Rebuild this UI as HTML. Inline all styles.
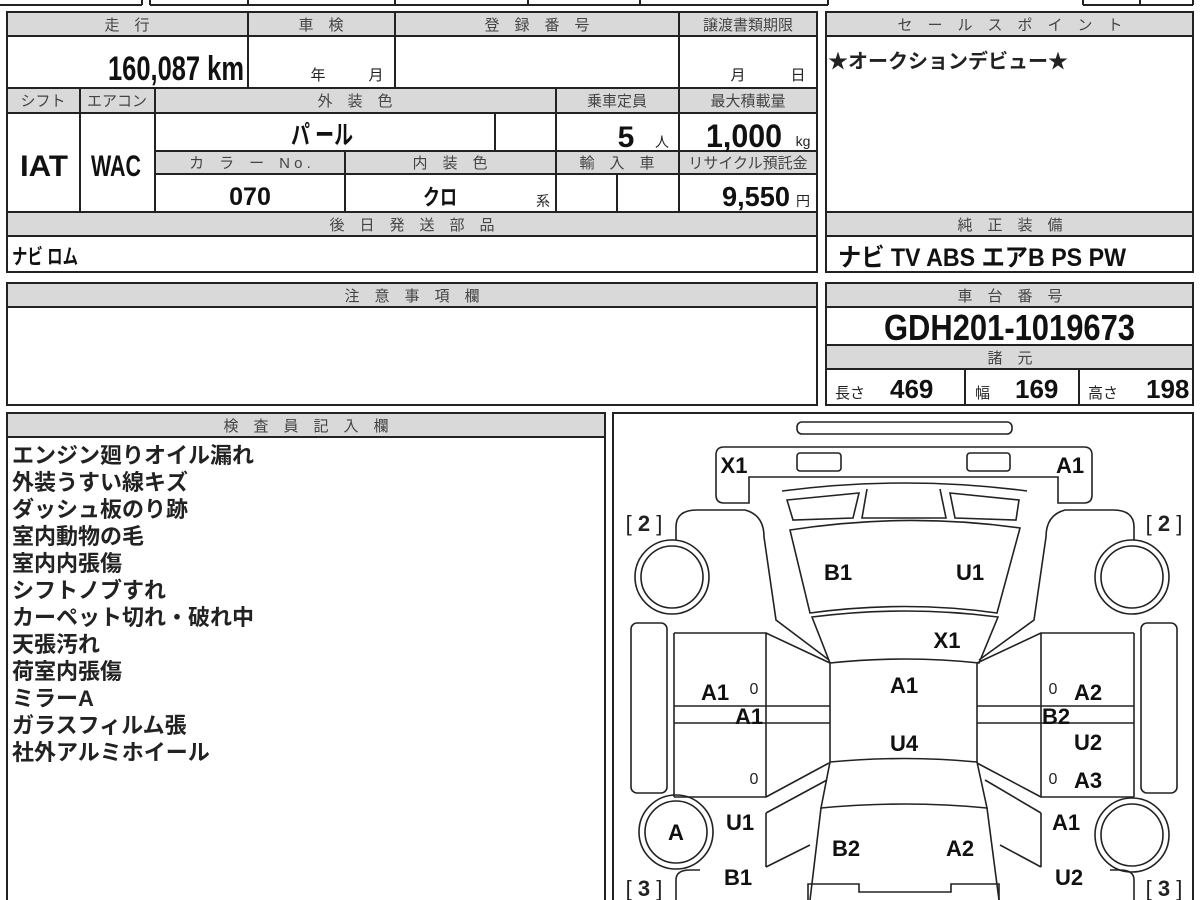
<!DOCTYPE html>
<html><head><meta charset="utf-8"><style>
html,body{margin:0;padding:0;background:#fff;width:1200px;height:900px;overflow:hidden}
svg{display:block}
.h{font-family:"Liberation Sans","Noto Sans CJK JP",sans-serif;font-size:15px;fill:#444;text-anchor:middle}
.v{font-family:"Liberation Sans Narrow","Liberation Sans","Noto Sans CJK JP",sans-serif;font-weight:bold;fill:#111}
.j{font-family:"Liberation Sans","Noto Sans CJK JP",sans-serif;fill:#222}
.d{font-family:"Liberation Sans","Noto Sans CJK JP",sans-serif;font-weight:bold;font-size:22px;fill:#111;text-anchor:middle}
</style></head><body>
<svg width="1200" height="900" viewBox="0 0 1200 900" xmlns="http://www.w3.org/2000/svg">
<g fill="#d9d9d9">
<rect x="7" y="12" width="810" height="24"/><rect x="7" y="88" width="810" height="25"/>
<rect x="155" y="151" width="662" height="23"/><rect x="7" y="212" width="810" height="24"/>
<rect x="826" y="12" width="367" height="24"/><rect x="826" y="212" width="367" height="24"/>
<rect x="826" y="283" width="367" height="24"/><rect x="826" y="345" width="367" height="24"/>
<rect x="7" y="283" width="810" height="24"/><rect x="7" y="413" width="598" height="24"/>
</g>
<g stroke="#222" stroke-width="2" fill="none">
<path d="M0,5H142M150,5H828M1083,5H1193M142,0V5M150,0V5M248,0V5M395,0V5M528,0V5M640,0V5M828,0V5M1083,0V5M1140,0V5M1193,0V5"/>
<rect x="7" y="12" width="810" height="260"/>
<path d="M7,36H817M7,88H817M7,113H817M155,151H817M155,174H817M7,212H817M7,236H817"/>
<path d="M248,12V88M395,12V88M679,12V212M80,88V212M155,88V212M556,88V212M495,113V151M345,151V212M617,174V212"/>
<rect x="826" y="12" width="367" height="260"/>
<path d="M826,36H1193M826,212H1193M826,236H1193"/>
<rect x="826" y="283" width="367" height="122"/>
<path d="M826,307H1193M826,345H1193M826,369H1193M965,369V405M1079,369V405"/>
<rect x="7" y="283" width="810" height="122"/><path d="M7,307H817"/>
<rect x="7" y="413" width="598" height="490"/><path d="M7,437H605"/>
<rect x="613" y="413" width="580" height="490"/>
</g>
<text class="h" x="127" y="30">走　行</text><text class="h" x="321" y="30">車　検</text>
<text class="h" x="537" y="30">登　録　番　号</text><text class="h" x="748" y="30">譲渡書類期限</text>
<text class="v" x="108" y="80" font-size="34" textLength="136" lengthAdjust="spacingAndGlyphs">160,087 km</text>
<text class="j" x="318" y="80" font-size="15" text-anchor="middle">年</text><text class="j" x="376" y="80" font-size="15" text-anchor="middle">月</text>
<text class="j" x="738" y="80" font-size="15" text-anchor="middle">月</text><text class="j" x="798" y="80" font-size="15" text-anchor="middle">日</text>
<text class="h" x="43" y="106">シフト</text><text class="h" x="117" y="106">エアコン</text>
<text class="h" x="355" y="106">外　装　色</text><text class="h" x="617" y="106">乗車定員</text>
<text class="h" x="748" y="106">最大積載量</text>
<text class="v" x="322" y="144" font-size="26" text-anchor="middle" textLength="62" lengthAdjust="spacingAndGlyphs">パ ール</text>
<text class="v" x="626" y="147" font-size="30" text-anchor="middle">5</text><text class="j" x="662" y="147" font-size="14" text-anchor="middle">人</text>
<text class="v" x="706" y="147" font-size="32" textLength="76" lengthAdjust="spacingAndGlyphs">1,000</text><text class="j" x="803" y="146" font-size="14" text-anchor="middle">kg</text>
<text class="v" x="20" y="176" font-size="30" textLength="48" lengthAdjust="spacingAndGlyphs">IAT</text><text class="v" x="91" y="176" font-size="30" textLength="50" lengthAdjust="spacingAndGlyphs">WAC</text>
<text class="h" x="250" y="168">カ　ラ　ー　N o .</text><text class="h" x="450" y="168">内　装　色</text>
<text class="h" x="617" y="168">輸　入　車</text><text class="h" x="748" y="168" font-size="14">リサイクル預託金</text>
<text class="v" x="250" y="205" font-size="25" text-anchor="middle">070</text>
<text class="v" x="440" y="205" font-size="22" text-anchor="middle" textLength="34" lengthAdjust="spacingAndGlyphs">クロ</text><text class="j" x="543" y="206" font-size="14" text-anchor="middle">系</text>
<text class="v" x="722" y="206" font-size="28" textLength="68" lengthAdjust="spacingAndGlyphs">9,550</text><text class="j" x="803" y="206" font-size="14" text-anchor="middle">円</text>
<text class="h" x="412" y="230">後　日　発　送　部　品</text>
<text class="v" x="12" y="264" font-size="21" textLength="66" lengthAdjust="spacingAndGlyphs">ナビ ロム</text>
<text class="h" x="1010" y="30">セ　ー　ル　ス　ポ　イ　ン　ト</text>
<text class="j" x="828" y="68" font-size="20" font-weight="bold" fill="#000">★オークションデビュー★</text>
<text class="h" x="1010" y="230">純　正　装　備</text>
<text class="v" x="838" y="266" font-size="25" textLength="288" lengthAdjust="spacingAndGlyphs">ナビ  TV  ABS  エアB  PS  PW</text>
<text class="h" x="1010" y="301">車　台　番　号</text>
<text class="v" x="884" y="340" font-size="36" textLength="251" lengthAdjust="spacingAndGlyphs">GDH201-1019673</text>
<text class="h" x="1010" y="363">諸　元</text>
<text class="j" x="835" y="398" font-size="15">長さ</text><text class="v" x="890" y="398" font-size="26">469</text>
<text class="j" x="975" y="398" font-size="15">幅</text><text class="v" x="1015" y="398" font-size="26">169</text>
<text class="j" x="1088" y="398" font-size="15">高さ</text><text class="v" x="1146" y="398" font-size="26">198</text>
<text class="h" x="412" y="301">注　意　事　項　欄</text>
<text class="h" x="306" y="431">検　査　員　記　入　欄</text>
<g class="j" font-size="22" font-weight="bold" fill="#111">
<text x="12" y="463">エンジン廻りオイル漏れ</text><text x="12" y="490">外装うすい線キズ</text>
<text x="12" y="517">ダッシュ板のり跡</text><text x="12" y="544">室内動物の毛</text>
<text x="12" y="571">室内内張傷</text><text x="12" y="598">シフトノブすれ</text>
<text x="12" y="625">カーペット切れ・破れ中</text><text x="12" y="652">天張汚れ</text>
<text x="12" y="679">荷室内張傷</text><text x="12" y="706">ミラーA</text>
<text x="12" y="733">ガラスフィルム張</text><text x="12" y="760">社外アルミホイール</text>
</g>
<g stroke="#222" stroke-width="1.6" fill="none">
<rect x="797" y="422" width="215" height="12" rx="5"/>
<path d="M716,495V455Q716,447 724,447H1084Q1092,447 1092,455V495Q1092,503 1084,503H1058V477H749V503H724Q716,503 716,495Z"/>
<rect x="797" y="453" width="44" height="18" rx="3"/><rect x="967" y="453" width="43" height="18" rx="3"/>
<path d="M782,491Q905,475 1027,491"/>
<path d="M787,500L859,493L853,518L793,520Z"/><path d="M950,493L1019,500L1016,520L955,518Z"/>
<path d="M867,489L862,518L946,518L940,489"/>
<path d="M790,530Q905,512 1020,528L997,613Q905,600 810,613Z"/>
<path d="M812,617Q905,605 998,617L979,663Q905,655 830,663Z"/>
<path d="M830,663V762Q905,755 977,762V663"/>
<path d="M830,762L821,808Q905,800 987,808L977,762"/>
<path d="M821,808L810,900M987,808L999,900"/>
<path d="M676,540V527Q676,510 697,510H745Q764,515 764,537L776,620L829,660"/>
<path d="M1134,540V527Q1134,510 1113,510H1065Q1046,515 1046,537L1034,620L979,660"/>
<path d="M674,633H766V797H674M674,706H830M674,723H830M766,633L830,663M766,797L829,763"/>
<path d="M1134,633H1041V797H1134M1134,706H977M1134,723H977M1041,633L977,663M1041,797L977,763"/>
<path d="M674,633V797M1134,633V797"/>
<rect x="631" y="623" width="36" height="170" rx="6"/><rect x="1141" y="623" width="36" height="170" rx="6"/>
<circle cx="672" cy="577" r="37"/><circle cx="672" cy="577" r="31"/>
<circle cx="676" cy="832" r="37"/><circle cx="676" cy="832" r="31"/>
<circle cx="1132" cy="577" r="37"/><circle cx="1132" cy="577" r="31"/>
<circle cx="1132" cy="835" r="37"/><circle cx="1132" cy="835" r="31"/>
<path d="M766,813L827,780M766,867L810,845M766,813V867M676,900V880Q676,870 690,870H700"/>
<path d="M1041,813L985,780M1041,867L1000,845M1041,813V867M1134,900V880Q1134,870 1120,870H1110"/>
<path d="M808,900V884H859V892H951V884H999V900"/>
</g>
<g class="d">
<text x="734" y="473">X1</text><text x="1070" y="473">A1</text>
<text x="838" y="580">B1</text><text x="970" y="580">U1</text><text x="947" y="648">X1</text>
<text x="715" y="700">A1</text><text x="904" y="693">A1</text><text x="1088" y="700">A2</text>
<text x="749" y="724">A1</text><text x="1056" y="724">B2</text><text x="1088" y="750">U2</text>
<text x="904" y="751">U4</text><text x="1088" y="788">A3</text>
<text x="676" y="840">A</text><text x="740" y="830">U1</text><text x="1066" y="830">A1</text>
<text x="846" y="856">B2</text><text x="960" y="856">A2</text>
<text x="738" y="885">B1</text><text x="1069" y="885">U2</text>
</g>
<g class="j" font-size="16" text-anchor="middle">
<text x="754" y="694">0</text><text x="1053" y="694">0</text><text x="754" y="784">0</text><text x="1053" y="784">0</text>
</g>
<g class="j" font-size="22" text-anchor="middle" fill="#222">
<text x="644" y="531">[ <tspan font-weight="bold">2</tspan> ]</text><text x="1164" y="531">[ <tspan font-weight="bold">2</tspan> ]</text>
<text x="644" y="896">[ <tspan font-weight="bold">3</tspan> ]</text><text x="1164" y="896">[ <tspan font-weight="bold">3</tspan> ]</text>
</g>
</svg>
</body></html>
